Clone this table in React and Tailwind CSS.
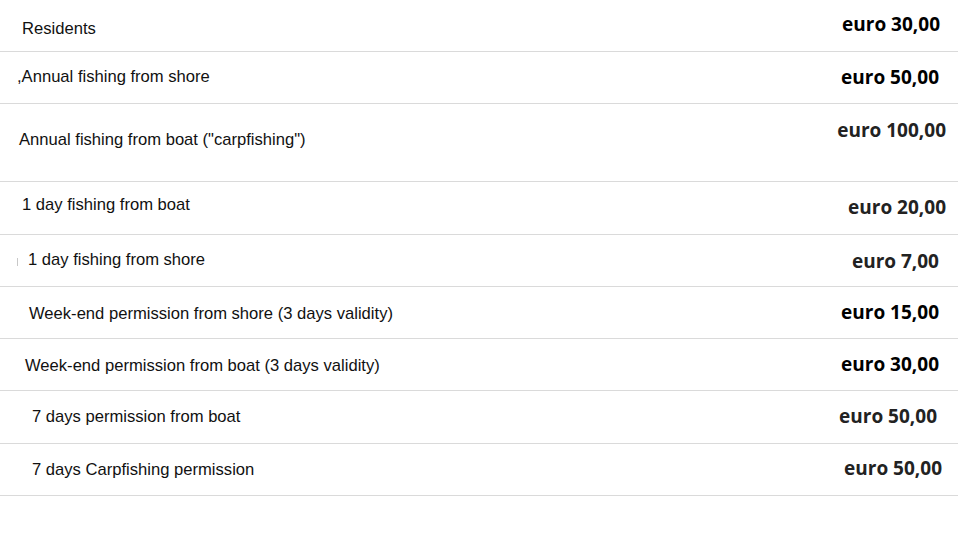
// Fishing permits price list

import React from 'react';

const permits = [
  { label: 'Residents', price: 'euro 30,00', h: 'h-[51px]', lp: 'pl-[22px] pt-[19px]', pp: 'pr-[18px] pt-[12px]', dark: true },
  { label: ',Annual fishing from shore', price: 'euro 50,00', h: 'h-[51px]', lp: 'pl-[17px] pt-[15px]', pp: 'pr-[19px] pt-[13px]', dark: true },
  { label: 'Annual fishing from boat ("carpfishing")', price: 'euro 100,00', h: 'h-[77px]', lp: 'pl-[19px] pt-[26px]', pp: 'pr-[12px] pt-[14px]' },
  { label: '1 day fishing from boat', price: 'euro 20,00', h: 'h-[52px]', lp: 'pl-[22px] pt-[13px]', pp: 'pr-[12px] pt-[13px]' },
  { label: '1 day fishing from shore', price: 'euro 7,00', h: 'h-[51px]', lp: 'pl-[28px] pt-[15px]', pp: 'pr-[19px] pt-[14px]', mark: true },
  { label: 'Week-end permission from shore (3 days validity)', price: 'euro 15,00', h: 'h-[51px]', lp: 'pl-[29px] pt-[17px]', pp: 'pr-[19px] pt-[13px]', dark: true },
  { label: 'Week-end permission from boat (3 days validity)', price: 'euro 30,00', h: 'h-[51px]', lp: 'pl-[25px] pt-[17px]', pp: 'pr-[19px] pt-[13px]', dark: true },
  { label: '7 days permission from boat', price: 'euro 50,00', h: 'h-[52px]', lp: 'pl-[32px] pt-[16px]', pp: 'pr-[21px] pt-[13px]' },
  { label: '7 days Carpfishing permission', price: 'euro 50,00', h: 'h-[51px]', lp: 'pl-[32px] pt-[16px]', pp: 'pr-[16px] pt-[12px]' },
];

export default function App() {
  return (
    <div className="w-[958px] h-[543px] bg-white overflow-hidden">
      {permits.map((p, i) => (
        <div key={i} className={`${p.h} flex justify-between items-start border-b border-[#dadada] box-content`}>
          <div className={`${p.lp} relative text-[16.6px] leading-[19px] text-[#111] font-['Liberation_Sans',Arial,sans-serif] whitespace-nowrap`}>
            {p.mark && <span className="absolute left-[17px] top-[23px] w-px h-[8px] bg-[#c8c8c8]" />}
            {p.label}
          </div>
          <div
            className={`${p.pp} text-[19px] leading-[24px] font-bold font-['Open_Sans',sans-serif] whitespace-nowrap ${p.dark ? 'text-black' : 'text-[#222]'}`}
          >
            {p.price}
          </div>
        </div>
      ))}
    </div>
  );
}
